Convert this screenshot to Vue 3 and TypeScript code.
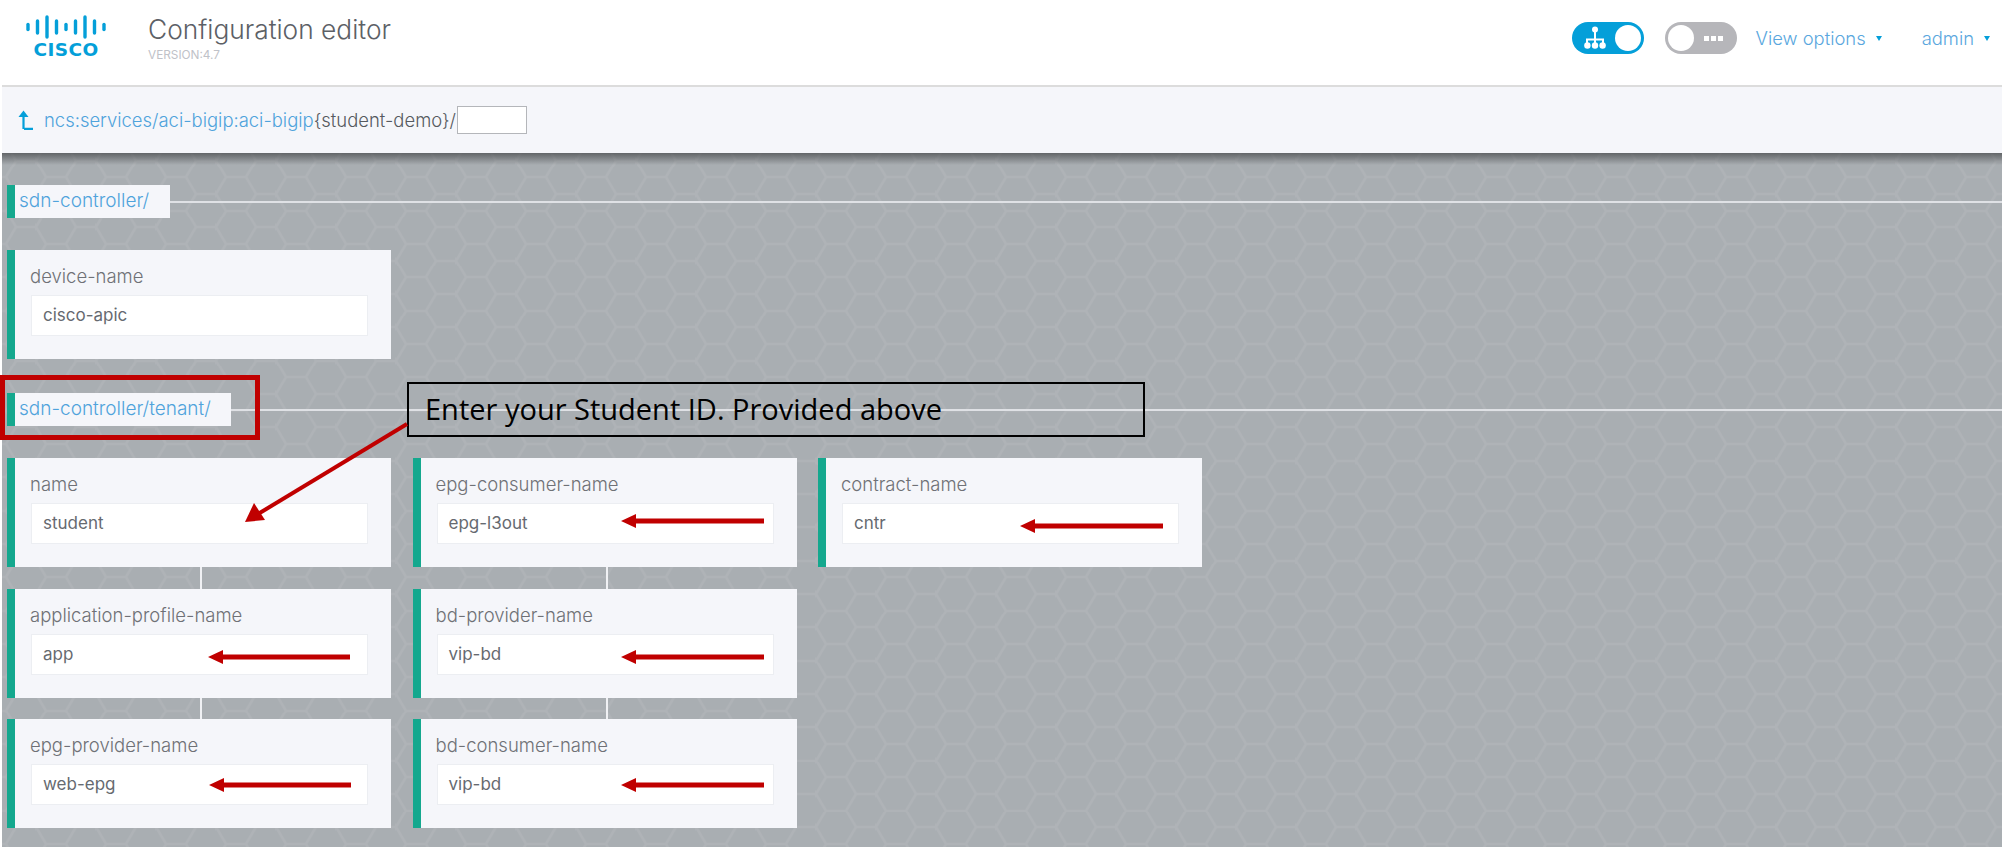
<script setup lang="ts">
interface Field {
  label: string;
  value: string;
}

const ciscoBars = [
  { x: 4, h: 5 },
  { x: 13.5, h: 12 },
  { x: 23, h: 20 },
  { x: 32.5, h: 12 },
  { x: 42, h: 5 },
  { x: 51.5, h: 12 },
  { x: 61, h: 20 },
  { x: 70.5, h: 12 },
  { x: 80, h: 5 },
];

const deviceFields: Field[] = [{ label: "device-name", value: "cisco-apic" }];

const tenantColumns: Field[][] = [
  [
    { label: "name", value: "student" },
    { label: "application-profile-name", value: "app" },
    { label: "epg-provider-name", value: "web-epg" },
  ],
  [
    { label: "epg-consumer-name", value: "epg-l3out" },
    { label: "bd-provider-name", value: "vip-bd" },
    { label: "bd-consumer-name", value: "vip-bd" },
  ],
  [{ label: "contract-name", value: "cntr" }],
];

// flechas rojas del tutorial: [x punta, x cola, y]
const arrows = [
  [621, 764, 521],
  [1020, 1163, 526],
  [208, 350, 657],
  [621, 764, 657],
  [209, 351, 785],
  [621, 764, 785],
];
</script>

<template>
  <div class="page">
    <header class="topbar">
      <div class="logo">
        <svg class="logo-bars" width="84" height="26" viewBox="0 0 84 26">
          <line
            v-for="bar in ciscoBars"
            :key="bar.x"
            :x1="bar.x"
            :x2="bar.x"
            :y1="13 - bar.h / 2"
            :y2="13 + bar.h / 2"
            stroke="#049fd9"
            stroke-width="3.400"
            stroke-linecap="round"
          />
        </svg>
        <span class="logo-word">CISCO</span>
      </div>
      <div class="title-block">
        <h1 class="title">Configuration editor</h1>
        <div class="version">VERSION:4.7</div>
      </div>
      <div class="top-actions">
        <div class="toggle toggle-on">
          <svg width="22" height="24" viewBox="0 0 22 24">
            <circle cx="11" cy="3.500" r="3" fill="#fff" />
            <path d="M11 5v13M3 18v-4.500h16V18" fill="none" stroke="#fff" stroke-width="2" />
            <circle cx="3.400" cy="19.500" r="3.200" fill="#fff" />
            <circle cx="11" cy="19.500" r="3.200" fill="#fff" />
            <circle cx="18.600" cy="19.500" r="3.200" fill="#fff" />
          </svg>
          <span class="knob"></span>
        </div>
        <div class="toggle toggle-off">
          <span class="knob"></span>
          <span class="dots"><i></i><i></i><i></i></span>
        </div>
        <a class="menu menu-view">View options<span class="caret"></span></a>
        <a class="menu menu-admin">admin<span class="caret"></span></a>
      </div>
    </header>

    <div class="path-bar">
      <svg class="up-icon" width="16" height="20" viewBox="0 0 16 20">
        <path d="M6.500 19V4M7 18.800h9" fill="none" stroke="#049fd9" stroke-width="2.200" />
        <path d="M1.500 7 6.500 0.500 11.500 7z" fill="#049fd9" />
      </svg>
      <span class="path-link">ncs:services/aci-bigip:aci-bigip</span>
      <span class="path-rest">{student-demo}/</span>
      <span class="path-input"></span>
    </div>

    <main class="canvas">
      <section class="group">
        <div class="group-head">
          <div class="group-title title-short">sdn-controller/</div>
          <div class="group-line"></div>
        </div>
        <div class="columns">
          <div class="column">
            <div v-for="field in deviceFields" :key="field.label" class="card">
              <div class="card-label">{{ field.label }}</div>
              <div class="card-input">{{ field.value }}</div>
            </div>
          </div>
        </div>
      </section>

      <section class="group">
        <div class="group-head">
          <div class="group-title title-long">sdn-controller/tenant/</div>
          <div class="group-line"></div>
        </div>
        <div class="columns">
          <div v-for="(column, i) in tenantColumns" :key="i" class="column">
            <div v-for="field in column" :key="field.label" class="card">
              <div class="card-label">{{ field.label }}</div>
              <div class="card-input">{{ field.value }}</div>
            </div>
          </div>
        </div>
      </section>
    </main>

    <!-- anotaciones encima de la captura -->
    <div class="red-box"></div>
    <div class="callout">Enter your Student ID. Provided above</div>
    <svg class="notes" width="2002" height="847" viewBox="0 0 2002 847">
      <line x1="407" y1="424" x2="258" y2="514" stroke="#c00000" stroke-width="4" />
      <polygon points="245,522 254,503 265,520" fill="#c00000" />
      <g v-for="a in arrows" :key="a[0] + '-' + a[2]">
        <rect :x="a[0] + 12" :y="a[2] - 2.500" :width="a[1] - a[0] - 12" height="5" fill="#c00000" />
        <polygon :points="`${a[0]},${a[2]} ${a[0] + 15},${a[2] - 7} ${a[0] + 15},${a[2] + 7}`" fill="#c00000" />
      </g>
    </svg>
  </div>
</template>

<style>
html,
body {
  margin: 0;
  background: #fff;
}
</style>

<style scoped>
.page {
  position: relative;
  display: flex;
  flex-direction: column;
  width: 2002px;
  height: 847px;
  padding-left: 2px;
  box-sizing: border-box;
  overflow: hidden;
  font-family: Inter, "Liberation Sans", sans-serif;
}

.topbar {
  display: flex;
  align-items: flex-start;
  height: 85px;
  flex: none;
  background: #fff;
}

.logo {
  display: flex;
  flex-direction: column;
  align-items: center;
  width: 84px;
  margin: 14px 0 0 22px;
}

.logo-word {
  margin-top: -1px;
  color: #049fd9;
  font-family: "DejaVu Sans", sans-serif;
  font-size: 18.500px;
  font-weight: 700;
  line-height: 22px;
  letter-spacing: 0.4px;
}

.title-block {
  margin: 13px 0 0 40px;
}

.title {
  margin: 0;
  color: #5c6066;
  font-size: 26.300px;
  font-weight: 300;
  line-height: 34px;
}

.version {
  margin-top: 1px;
  color: #c0c2c8;
  font-size: 11.800px;
  line-height: 14px;
}

.top-actions {
  display: flex;
  align-items: center;
  margin: 22px 0 0 auto;
  height: 32px;
}

.toggle {
  display: flex;
  align-items: center;
  box-sizing: border-box;
  width: 72px;
  height: 32px;
  border-radius: 16px;
}

.toggle-on {
  justify-content: space-between;
  padding: 0 3px 0 12px;
  background: #049fd9;
}

.toggle-off {
  margin-left: 21px;
  padding-left: 3px;
  background: #b6b6ba;
}

.knob {
  width: 26px;
  height: 26px;
  border-radius: 50%;
  background: #fff;
}

.dots {
  display: flex;
  gap: 2px;
  margin-left: 10px;
}

.dots i {
  width: 5px;
  height: 5px;
  background: #fff;
}

.menu {
  display: flex;
  align-items: center;
  color: #5aa7de;
  font-size: 18.400px;
  font-weight: 300;
}

.menu-view {
  margin-left: 19px;
}

.menu-admin {
  margin: 0 12px 0 40px;
}

.caret {
  width: 0;
  height: 0;
  margin-left: 10px;
  border-left: 3.500px solid transparent;
  border-right: 3.500px solid transparent;
  border-top: 5px solid #049fd9;
}

.path-bar {
  position: relative;
  z-index: 1;
  display: flex;
  align-items: center;
  flex: none;
  height: 66px;
  border-top: 2px solid #dcdcdc;
  background: #f5f6fa;
  font-size: 18.450px;
  font-weight: 300;
}

.up-icon {
  margin: 0 11px 0 15px;
}

.path-link {
  color: #4fa3dc;
}

.path-rest {
  color: #555a60;
}

.path-input {
  box-sizing: border-box;
  width: 70px;
  height: 28px;
  margin-left: 1px;
  border: 1px solid #b4b6ba;
  background: #fff;
}

.canvas {
  flex: 1;
  padding: 32px 0 0 5px;
  background-color: #a9aeb2;
  background-image:
    linear-gradient(rgba(60, 62, 64, 0.65), rgba(60, 62, 64, 0) 12px),
    url("data:image/svg+xml,%3Csvg xmlns='http://www.w3.org/2000/svg' width='60' height='33.333'%3E%3Cpath d='M10 0h20l10 16.667h20M40 16.667 30 33.333H10L0 16.667 10 0M0 16.667h-1' fill='none' stroke='%23afb3b7' stroke-width='2.500'/%3E%3C/svg%3E");
  background-position: 0 0, 33.500px 24.300px;
  background-size: auto, 60px 33.333px;
}

.group {
  margin-bottom: 34px;
}

.group-head {
  display: flex;
  align-items: center;
  height: 33px;
  margin-bottom: 32px;
}

.group-title {
  box-sizing: border-box;
  height: 33px;
  padding-left: 4px;
  border-left: 8px solid #14a88e;
  background: #f5f6fa;
  color: #4fa3dc;
  font-size: 19px;
  font-weight: 300;
  line-height: 31px;
}

.title-short {
  width: 163px;
}

.title-long {
  width: 224px;
}

.group-line {
  flex: 1;
  height: 2px;
  background: #dfe1e5;
}

.columns {
  display: flex;
  gap: 21.500px;
}

.column {
  display: flex;
  flex-direction: column;
  gap: 21.500px;
  width: 384px;
}

.card {
  position: relative;
  box-sizing: border-box;
  height: 109px;
  padding: 15px 23px 0 16px;
  border-left: 8px solid #14a88e;
  background: #f5f6fa;
}

.card + .card::before {
  content: "";
  position: absolute;
  top: -21.500px;
  left: 185px;
  width: 2px;
  height: 21.500px;
  background: #f0f1f4;
}

.card-label {
  margin-left: -1px;
  color: #6f7176;
  font-size: 18.500px;
  font-weight: 300;
  line-height: 22px;
}

.card-input {
  box-sizing: border-box;
  height: 41px;
  margin-top: 8px;
  padding-left: 11px;
  border: 1px solid #eceef2;
  background: #fff;
  color: #666a70;
  font-size: 17px;
  line-height: 38px;
}

.red-box {
  position: absolute;
  top: 375px;
  left: 0;
  box-sizing: border-box;
  width: 260px;
  height: 65px;
  border: 5px solid #c00000;
}

.callout {
  position: absolute;
  top: 382px;
  left: 407px;
  box-sizing: border-box;
  width: 738px;
  height: 55px;
  padding-left: 16px;
  border: 2px solid #000;
  color: #000;
  font-family: "Open Sans", sans-serif;
  font-size: 29px;
  line-height: 50px;
}

.notes {
  position: absolute;
  top: 0;
  left: 0;
  pointer-events: none;
}
</style>
